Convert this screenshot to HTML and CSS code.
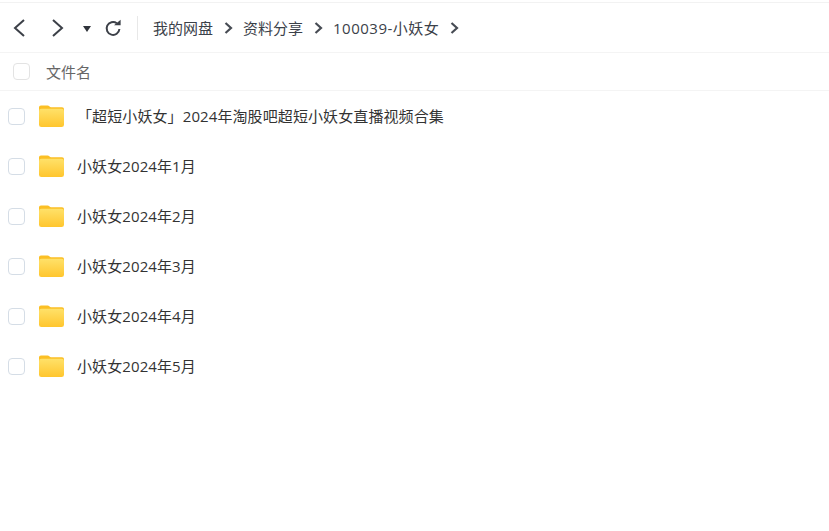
FILE: index.html
```html
<!DOCTYPE html>
<html lang="zh-CN">
<head>
  <meta charset="UTF-8" />
  <title>资料分享</title>
  <link rel="stylesheet" href="styles.css">
</head>
<body>

  <div class="toolbar">
    <svg class="nav-icon back" viewBox="0 0 14 20"><path d="M12 2 3 10l9 8"/></svg>
    <svg class="nav-icon forward" viewBox="0 0 14 20"><path d="M2 2l9 8-9 8"/></svg>
    <span class="caret"></span>
    <svg class="refresh" viewBox="0 0 18 18"><path d="M12.800 4.300A6.400 6.400 0 1 0 15.400 10"/><path class="fill" d="M10 6.200h6.600V0.800z"/></svg>
    <span class="divider"></span>
    <nav class="crumbs">
      <span>我的网盘</span>
      <svg class="sep" viewBox="0 0 9 12"><path d="M1.500 1 7 6l-5.500 5"/></svg>
      <span>资料分享</span>
      <svg class="sep" viewBox="0 0 9 12"><path d="M1.500 1 7 6l-5.500 5"/></svg>
      <span class="crumb-id">100039-小妖女</span>
      <svg class="sep" viewBox="0 0 9 12"><path d="M1.500 1 7 6l-5.500 5"/></svg>
    </nav>
  </div>

  <div class="list-head">
    <span class="check head-check"></span>
    <span class="head-name">文件名</span>
  </div>

  <ul class="files">
    <li class="file"><span class="check"></span><svg class="folder" viewBox="0 0 26 24"><use href="#folder"/></svg><span class="name">「超短小妖女」2024年淘股吧超短小妖女直播视频合集</span></li>
    <li class="file"><span class="check"></span><svg class="folder" viewBox="0 0 26 24"><use href="#folder"/></svg><span class="name">小妖女2024年1月</span></li>
    <li class="file"><span class="check"></span><svg class="folder" viewBox="0 0 26 24"><use href="#folder"/></svg><span class="name">小妖女2024年2月</span></li>
    <li class="file"><span class="check"></span><svg class="folder" viewBox="0 0 26 24"><use href="#folder"/></svg><span class="name">小妖女2024年3月</span></li>
    <li class="file"><span class="check"></span><svg class="folder" viewBox="0 0 26 24"><use href="#folder"/></svg><span class="name">小妖女2024年4月</span></li>
    <li class="file"><span class="check"></span><svg class="folder" viewBox="0 0 26 24"><use href="#folder"/></svg><span class="name">小妖女2024年5月</span></li>
  </ul>

  <svg class="defs" width="0" height="0">
    <defs>
      <linearGradient id="folderFront" x1="0" y1="0" x2="0" y2="1">
        <stop offset="0" stop-color="#ffe169"/>
        <stop offset="1" stop-color="#ffc62e"/>
      </linearGradient>
      <g id="folder">
        <path d="M0 3a2 2 0 0 1 2-2h7c1.500 0 2 1.800 3.500 1.800H24a2 2 0 0 1 2 2V8H0z" fill="#fbbf24"/>
        <rect y="4.500" width="26" height="19" rx="2.500" fill="url(#folderFront)"/>
      </g>
    </defs>
  </svg>

</body>
</html>
```

FILE: styles.css
```css
body {
  margin: 0;
  background-color: #fff;
  color: #333;
  font-family: "Open Sans", "Noto Sans CJK SC", sans-serif;
  font-size: 15px;
  overflow: hidden;
}

.toolbar {
  display: flex;
  align-items: center;
  height: 49px;
  margin-top: 2px;
  padding-left: 12px;
  border-top: 1px solid #f2f2f2;
  border-bottom: 1px solid #f4f4f4;
}

.nav-icon {
  width: 14px;
  height: 20px;
  fill: none;
  stroke: #3c4048;
  stroke-width: 2;
}

.forward {
  margin-left: 25px;
}

.caret {
  width: 0;
  height: 0;
  margin: 2px 0 0 18px;
  border-top: 6px solid #30343b;
  border-left: 4px solid transparent;
  border-right: 4px solid transparent;
}

.refresh {
  width: 18px;
  height: 18px;
  margin-left: 13px;
  fill: none;
  stroke: #3c4048;
  stroke-width: 2;
}

.refresh .fill {
  fill: #3c4048;
  stroke: none;
}

.divider {
  width: 1px;
  height: 24px;
  margin: 0 15px;
  background-color: #e8e8e8;
}

.crumbs {
  display: flex;
  align-items: center;
  color: #3b4149;
}

.crumbs span {
  padding-bottom: 1px;
}

.crumbs .crumb-id {
  letter-spacing: 0.5px;
}

.sep {
  width: 9px;
  height: 12px;
  margin: 0 10.5px;
  fill: none;
  stroke: #474c54;
  stroke-width: 2.200;
}

.list-head {
  display: flex;
  align-items: center;
  height: 37px;
  border-bottom: 1px solid #f4f4f4;
}

.check {
  box-sizing: border-box;
  width: 17px;
  height: 17px;
  border: 1px solid #d5dde6;
  border-radius: 4px;
  background-color: #fff;
  flex: none;
}

.head-check {
  margin-left: 13px;
  border-color: #e3e3e3;
}

.head-name {
  margin-left: 16px;
  padding-bottom: 1px;
  color: #666;
}

.files {
  margin: 0;
  padding: 0;
  list-style: none;
}

.file {
  display: flex;
  align-items: center;
  height: 50px;
  padding-left: 8px;
}

.folder {
  width: 25px;
  height: 24px;
  margin-left: 14px;
}

.name {
  margin-left: 13px;
  padding-bottom: 2px;
  letter-spacing: 0.1px;
  color: #333;
}

.defs {
  position: absolute;
}
```
